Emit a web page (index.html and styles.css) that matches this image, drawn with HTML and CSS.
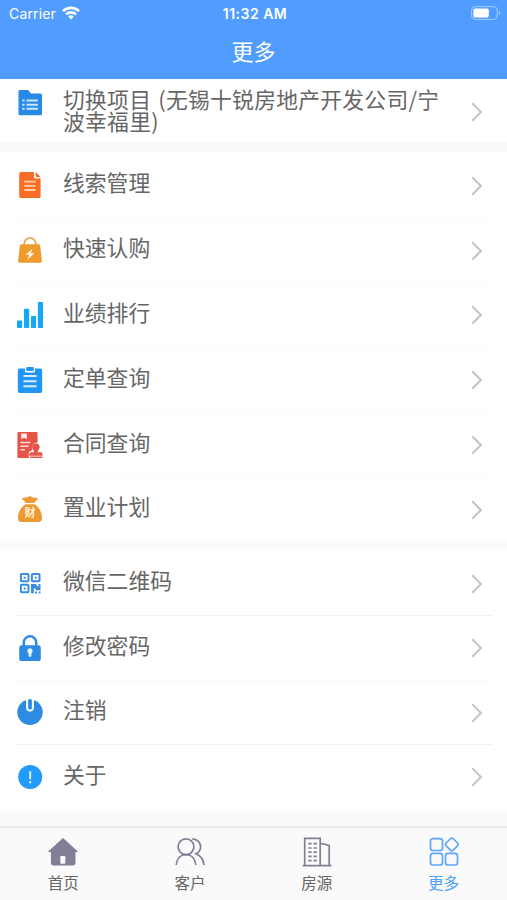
FILE: index.html
```html
<!DOCTYPE html>
<html lang="zh-CN">
<head>
  <meta charset="UTF-8" />
  <meta name="viewport" content="width=device-width, initial-scale=1.0" />
  <title>更多</title>
  <link rel="stylesheet" href="styles.css">
</head>

<body>
  <main class="app">
    <header class="header">
      <div class="status-bar">
        <div class="carrier">
          <span>Carrier</span>
          <svg width="18" height="14" viewBox="0 0 18 14" fill="none" stroke="#fff" stroke-width="2.6">
            <path d="M1 5.2a11.3 11.3 0 0 1 16 0" />
            <path d="M4 8.4a7.1 7.1 0 0 1 10 0" />
            <path d="M9 13.4l-2.8-2.9a4 4 0 0 1 5.6 0z" fill="#fff" stroke="none" />
          </svg>
        </div>
        <div class="time">11:32 AM</div>
        <div class="battery">
          <svg width="30" height="15" viewBox="0 0 30 15">
            <rect x=".6" y=".6" width="25.6" height="12.8" rx="3.6" fill="none" stroke="#a3cbff" />
            <rect x="2.4" y="2.4" width="15.4" height="9.2" rx="1.8" fill="#fff" />
            <path d="M27.8 4.8c1.9.7 1.9 3.7 0 4.4z" fill="#a3cbff" />
          </svg>
        </div>
      </div>
      <h1>更多</h1>
    </header>

    <section class="group">
      <a class="row row-project">
        <svg class="icon" viewBox="0 0 26 26">
          <path d="M1.5 1.2Q1.5 0 2.7 0H11l3 3.4h9.3q1.7 0 1.7 1.7v18.6q0 1.6-1.7 1.6H3.2q-1.7 0-1.7-1.6z" fill="#278ae4" />
          <path d="M9.5 10.5h11.3M9.5 14.7h11.3M9.5 18.8h11.3M5.3 10.5h2.3M5.3 14.7h2.3M5.3 18.8h2.3" stroke="#c9e9ff" stroke-width="2" />
        </svg>
        <span class="label">切换项目 (无锡十锐房地产开发公司/宁波幸福里)</span>
        <svg class="arrow" viewBox="0 0 12 20"><path d="M1.2 1.3l8.7 8.7-8.7 8.7" /></svg>
      </a>
    </section>

    <section class="group group-business">
      <a class="row">
        <svg class="icon" viewBox="0 0 26 26">
          <path d="M3.8 0H17v5q0 1.6 1.6 1.6h5v17.8q0 1.6-1.6 1.6H3.8q-1.6 0-1.6-1.6V1.6Q2.2 0 3.8 0z" fill="#f96d27" />
          <path d="M18.6 0l5 5h-3.7q-1.3 0-1.3-1.3z" fill="#f96d27" />
          <path d="M7.2 9.6h11.4M7.2 13.8h11.4M7.2 18h11.4" stroke="#ffd0aa" stroke-width="1.8" />
        </svg>
        <span class="label">线索管理</span>
        <svg class="arrow" viewBox="0 0 12 20"><path d="M1.2 1.3l8.7 8.7-8.7 8.7" /></svg>
      </a>
      <a class="row">
        <svg class="icon" viewBox="0 0 26 26">
          <path d="M7.3 9V6.6a5.7 5.7 0 0 1 11.4 0V9" fill="none" stroke="#eaa650" stroke-width="1.7" />
          <path d="M4.5 7.2h17q1.4 0 1.6 1.4l1.8 15.2q.2 2-1.7 2H2.8q-1.9 0-1.7-2L2.9 8.6q.2-1.4 1.6-1.4z" fill="#ee9a2d" />
          <path d="M15.7 11.5l-7.2 6.3h3.7l-1.9 5.1 7.2-6.6h-3.8z" fill="#fff3df" />
        </svg>
        <span class="label">快速认购</span>
        <svg class="arrow" viewBox="0 0 12 20"><path d="M1.2 1.3l8.7 8.7-8.7 8.7" /></svg>
      </a>
      <a class="row">
        <svg class="icon" viewBox="0 0 26 26" fill="#14a9f5">
          <rect x="0" y="18.6" width="5.2" height="7.4" rx=".8" />
          <rect x="7" y="6.8" width="5.2" height="19.2" rx=".8" />
          <rect x="14" y="14" width="5" height="12" rx=".8" />
          <rect x="20.9" y="0" width="5.1" height="26" rx=".8" />
        </svg>
        <span class="label">业绩排行</span>
        <svg class="arrow" viewBox="0 0 12 20"><path d="M1.2 1.3l8.7 8.7-8.7 8.7" /></svg>
      </a>
      <a class="row">
        <svg class="icon" viewBox="0 0 26 26">
          <path d="M2.8 1.5h5.2v2.7q0 1.3 1.3 1.3h7.4q1.3 0 1.3-1.3V1.5h5.2q2 0 2 2v20.5q0 2-2 2H2.8q-2 0-2-2V3.5q0-2 2-2z" fill="#2196f5" />
          <rect x="9.2" y="0" width="7.6" height="4.1" rx=".8" fill="#2196f5" />
          <path d="M6.5 9h13M6.5 14.2h13M6.5 19.2h13" stroke="#d8eeff" stroke-width="2" />
        </svg>
        <span class="label">定单查询</span>
        <svg class="arrow" viewBox="0 0 12 20"><path d="M1.2 1.3l8.7 8.7-8.7 8.7" /></svg>
      </a>
      <a class="row">
        <svg class="icon" viewBox="0 0 26 26">
          <path d="M1.6 0h17.8q1.2 0 1.2 1.2v9.3a5.3 5.3 0 0 0-5.3 7.6l-3.5 1.9v6H1.6q-1.2 0-1.2-1.2V1.2Q.4 0 1.6 0z" fill="#e65349" />
          <path d="M4.2 1.5h5.6v5.8L7 5.4 4.2 7.3z" fill="#fff0ec" />
          <path d="M3.4 10.5h9.8M3.4 14.2h8.3M3.4 17.8h4.5" stroke="#ffded8" stroke-width="1.5" />
          <path d="M18.9 11.2a4.1 4.1 0 0 1 2.3 7.3q-.6.5-.4 1.700h2.800q1.900 0 1.900 1.800v1.700H12.300V22q0-1.800 1.900-1.800H17q.2-1.200-.5-1.700a4.100 4.100 0 0 1 2.400-7.300zM13 24.500h12.400V26H13z" fill="#e65349" />
        </svg>
        <span class="label">合同查询</span>
        <svg class="arrow" viewBox="0 0 12 20"><path d="M1.2 1.3l8.7 8.7-8.7 8.7" /></svg>
      </a>
      <a class="row">
        <svg class="icon" viewBox="0 0 26 26">
          <path d="M8.6 6.9Q7.400 4.200 4.600 3q2-2.400 4.800-1.200Q13-1.400 16.500 1.800q2.800-1.200 4.900 1.200-2.800 1.200-4 3.900z" fill="#ec9a31" />
          <path d="M8.600 8.200h8.800c4.300 2.400 7.600 7.800 7.600 13.600q0 4.200-3.200 4.200H4.200Q1 26 1 21.800C1 16 4.300 10.600 8.600 8.200z" fill="#ec9a31" />
          <text class="coin" x="13" y="21.400" text-anchor="middle">财</text>
        </svg>
        <span class="label">置业计划</span>
        <svg class="arrow" viewBox="0 0 12 20"><path d="M1.2 1.3l8.7 8.7-8.7 8.7" /></svg>
      </a>
    </section>

    <section class="group group-account">
      <a class="row row-lined">
        <svg class="icon" viewBox="0 0 26 26">
          <g fill="none" stroke="#398ce2" stroke-width="2">
            <rect x="3.9" y="3.9" width="7.6" height="7.4" rx=".8" />
            <rect x="14.9" y="3.9" width="7.6" height="7.4" rx=".8" />
            <rect x="3.9" y="14.8" width="7.6" height="7.4" rx=".8" />
          </g>
          <path d="M6.700 6.700h2v2h-2zM17.700 6.700h2v2h-2zM6.700 17.600h2v2h-2zM14 14h4.700l2.700 3.200V14h2.100v6.300h-3.700l-3-2.500v5.400H14zM18 21.600h2v1.800h-2zM21.700 21.600h1.800v1.800h-1.800z" fill="#398ce2" />
        </svg>
        <span class="label">微信二维码</span>
        <svg class="arrow" viewBox="0 0 12 20"><path d="M1.2 1.3l8.7 8.7-8.7 8.7" /></svg>
      </a>
      <a class="row">
        <svg class="icon" viewBox="0 0 26 26">
          <path d="M6.8 12V7.5a6.2 6.2 0 0 1 12.4 0V12" fill="none" stroke="#2e8be3" stroke-width="2.5" />
          <rect x="2.2" y="10.3" width="21.6" height="15.7" rx="2.6" fill="#2e8be3" />
          <path d="M13 13.2a2.7 2.7 0 0 1 1.4 5v2.600q0 1.100-1.400 1.100t-1.400-1.100v-2.600a2.700 2.700 0 0 1 1.400-5z" fill="#e8f5ff" />
        </svg>
        <span class="label">修改密码</span>
        <svg class="arrow" viewBox="0 0 12 20"><path d="M1.2 1.3l8.7 8.7-8.7 8.7" /></svg>
      </a>
      <a class="row row-lined">
        <svg class="icon" viewBox="0 0 26 26">
          <circle cx="13" cy="13.3" r="12.7" fill="#2e8be3" />
          <path d="M9.1 0v8.600a3.900 3.900 0 0 0 7.800 0V0z" fill="#fff" />
          <rect x="11.1" y="0" width="3.8" height="10.6" rx="1.7" fill="#2e8be3" />
        </svg>
        <span class="label">注销</span>
        <svg class="arrow" viewBox="0 0 12 20"><path d="M1.2 1.3l8.7 8.7-8.7 8.7" /></svg>
      </a>
      <a class="row">
        <svg class="icon" viewBox="0 0 26 26">
          <circle cx="13.2" cy="13" r="12" fill="#229bfa" />
          <path d="M13.2 7.2v8M13.2 17.100v2.200" stroke="#d9efff" stroke-width="2" />
        </svg>
        <span class="label">关于</span>
        <svg class="arrow" viewBox="0 0 12 20"><path d="M1.2 1.3l8.7 8.7-8.7 8.7" /></svg>
      </a>
    </section>

    <nav class="tab-bar">
      <a class="tab">
        <svg width="32" height="32" viewBox="0 0 32 32">
          <path d="M16 2L30.600 15.200q.6.900-.5.900h-1.600v11q0 2.400-2.400 2.400H6.300q-2.400 0-2.400-2.400v-11H1.900q-1.100 0-.5-.9z" fill="#807f95" />
          <rect x="13.300" y="20" width="5" height="7.700" rx=".7" fill="#fafafa" />
        </svg>
        <span>首页</span>
      </a>
      <a class="tab">
        <svg width="32" height="32" viewBox="0 0 32 32" fill="none" stroke="#807f95" stroke-width="1.7">
          <circle cx="12" cy="10.7" r="7.9" />
          <path d="M2.2 29c.5-6.600 4.500-10.400 9.800-10.400s9.300 3.800 9.800 10.400" />
          <path d="M18.300 2.800c5 .3 8.300 3.800 8.300 8 0 3.100-1.800 5.700-4.700 7 4.600 1.800 7.600 5.500 8 11.200" />
        </svg>
        <span>客户</span>
      </a>
      <a class="tab">
        <svg width="32" height="32" viewBox="0 0 32 32" fill="none" stroke="#807f95" stroke-width="1.7">
          <path d="M1.800 29.700h28.600M3.700 29.500V2.300h15.500v27.200M19.200 7.200l9 2.300v20" />
          <path d="M7.300 7.600h3.300M12.500 7.600h3.300M7.300 12h3.300M12.500 12h3.300M7.300 16.200h3.300M12.500 16.200h3.300M7.300 20.400h3.300M12.500 20.400h3.300M7.300 24.600h3.300M12.500 24.600h3.300" />
        </svg>
        <span>房源</span>
      </a>
      <a class="tab active">
        <svg width="32" height="32" viewBox="0 0 32 32" fill="none" stroke="#61a5fa" stroke-width="1.7">
          <rect x="2.5" y="2.7" width="12" height="11.8" rx="2.6" />
          <rect x="2.5" y="17.4" width="12" height="11.6" rx="2.6" />
          <rect x="17.5" y="17.4" width="12" height="11.6" rx="2.6" />
          <rect x="18.8" y="3.4" width="10" height="10" rx="2" transform="rotate(45 23.8 8.4)" />
        </svg>
        <span>更多</span>
      </a>
    </nav>
  </main>
</body>
</html>
```
FILE: styles.css
```css
* {
  box-sizing: border-box;
}

body {
  margin: 0;
  font-family: "Noto Sans CJK SC", sans-serif;
  background: #fafafa;
  color: #666;
}

.app {
  display: flex;
  flex-direction: column;
  height: 900px;
  overflow: hidden;
}

.header {
  height: 79px;
  background: #509dff;
  color: #fff;
}

.status-bar {
  display: grid;
  grid-template-columns: 1fr auto 1fr;
  align-items: center;
  height: 27px;
  padding: 0 6px 0 9px;
  font-family: Inter, sans-serif;
  font-size: 14px;
}

.carrier {
  display: flex;
  align-items: center;
  gap: 6px;
  letter-spacing: 0.15px;
}

.carrier svg {
  margin-top: -2px;
}

.time {
  font-size: 14px;
  font-weight: 600;
  letter-spacing: 0.5px;
}

.battery {
  display: flex;
  justify-content: flex-end;
}

h1 {
  margin: 0;
  font-size: 22px;
  font-weight: 400;
  line-height: 47px;
  text-align: center;
}

.group {
  background: #fff;
  margin-bottom: 10px;
}

.row {
  display: flex;
  align-items: center;
  height: 64.8px;
  padding: 0 24px 0 17px;
}

.group-account {
  margin-bottom: 0;
}

.group-account .row {
  height: 64.5px;
  padding-bottom: 2px;
}

.row + .row {
  background: linear-gradient(#fafafa, #fafafa) 16px 0 / calc(100% - 30px) 1px no-repeat;
}

.row-lined + .row {
  background-image: linear-gradient(#f2f2f2, #f2f2f2);
}

.icon {
  flex: none;
  width: 26px;
  height: 26px;
  margin-top: 2px;
}

.label {
  flex: 1;
  margin: -4px 0 0 20px;
  font-size: 21.8px;
  line-height: 22px;
}

.arrow {
  flex: none;
  width: 12px;
  height: 20px;
  margin-top: 3px;
  fill: none;
  stroke: #c4c4c8;
  stroke-width: 2;
}

.row.row-project {
  height: 63px;
}

.row-project .icon {
  align-self: flex-start;
  margin-top: 11px;
}

/* the long project name wraps to two lines */
.row-project .label {
  margin-top: -2px;
  margin-right: 20px;
  letter-spacing: 0.25px;
  word-spacing: 2px;
}

.row-project .arrow {
  margin-top: 2px;
}

.coin {
  font-size: 11px;
  font-weight: 700;
  fill: #fff0d8;
}

.tab-bar {
  display: grid;
  grid-template-columns: repeat(4, 1fr);
  height: 74px;
  margin-top: auto;
  border-top: 2px solid #e9e9eb;
  background: #fafafa;
}

.tab {
  display: flex;
  flex-direction: column;
  align-items: center;
  padding-top: 8px;
  color: #666;
  font-size: 15.5px;
  line-height: 22px;
}

.tab span {
  margin-top: 3px;
}

.tab.active {
  color: #4ba0fa;
}
```
